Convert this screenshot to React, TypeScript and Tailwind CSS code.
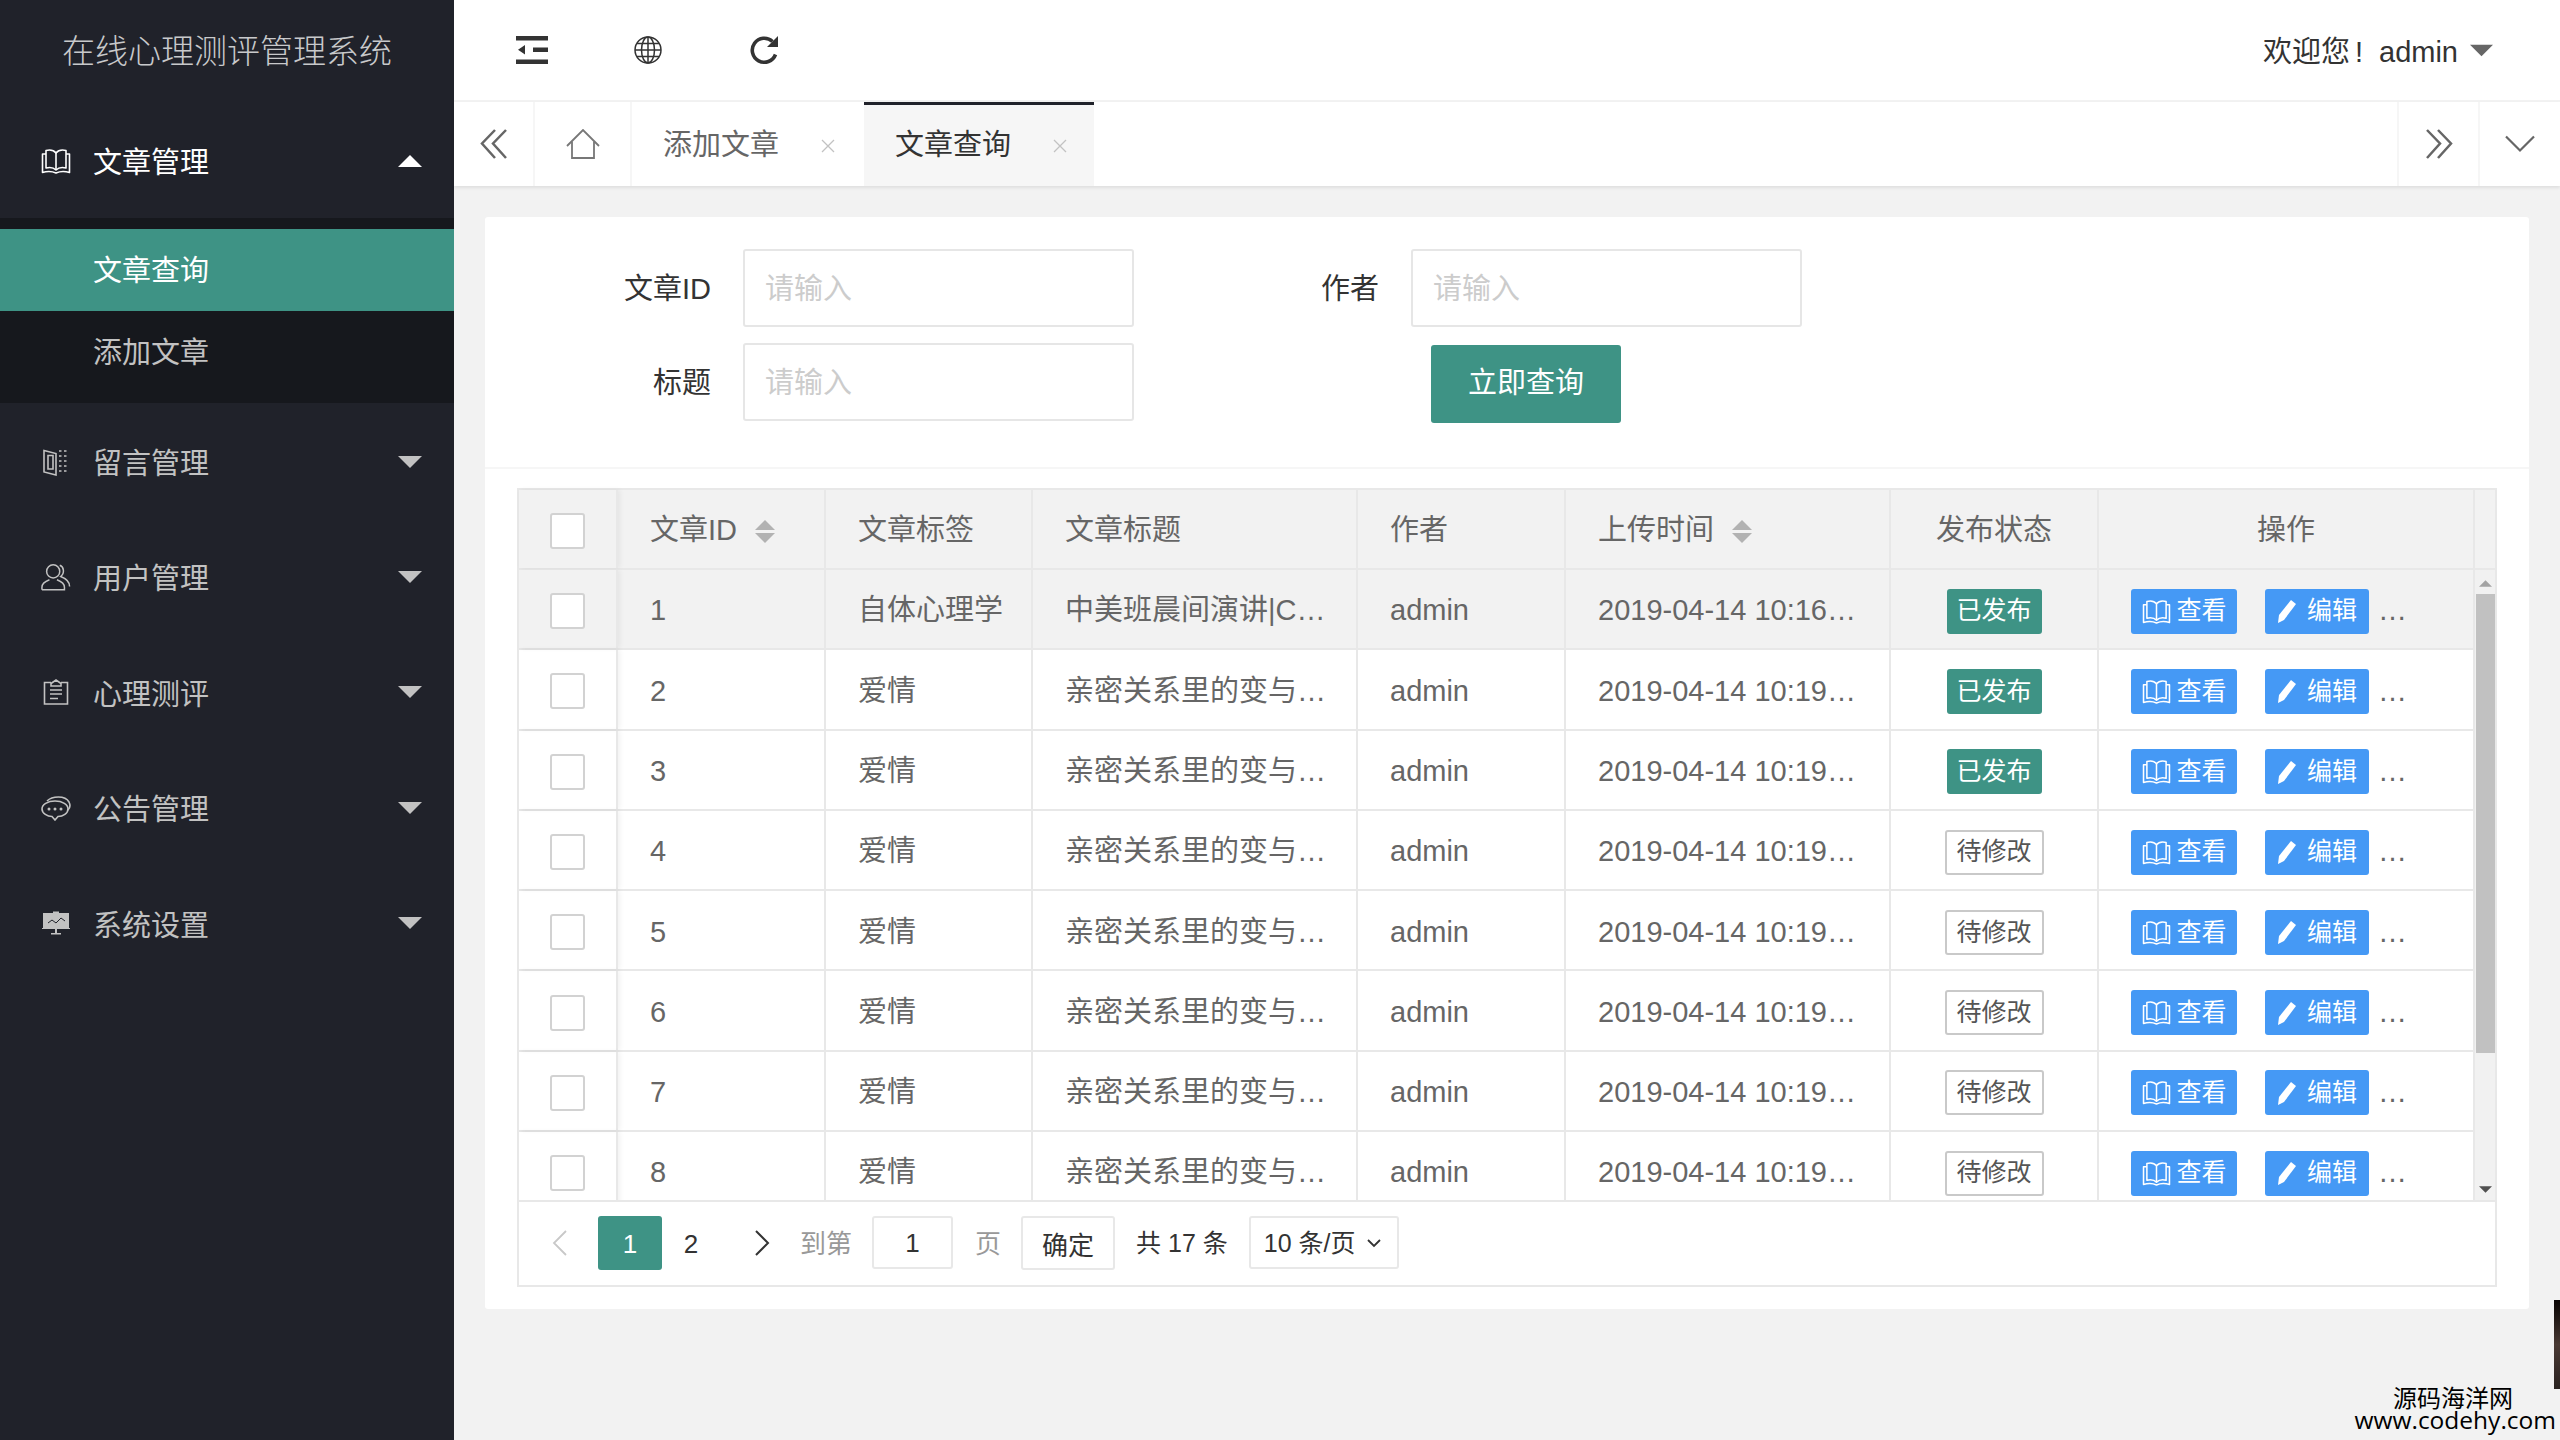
import type { ReactNode } from "react";

const colWidths = "grid-cols-[99px_208px_207px_325px_208px_325px_208px_376px]";

const rows = [
  { id: 1, tag: "自体心理学", title: "中美班晨间演讲|Coco老师", time: "2019-04-14 10:16:20", done: true },
  { id: 2, tag: "爱情", title: "亲密关系里的变与不变之道", time: "2019-04-14 10:19:31", done: true },
  { id: 3, tag: "爱情", title: "亲密关系里的变与不变之道", time: "2019-04-14 10:19:31", done: true },
  { id: 4, tag: "爱情", title: "亲密关系里的变与不变之道", time: "2019-04-14 10:19:31", done: false },
  { id: 5, tag: "爱情", title: "亲密关系里的变与不变之道", time: "2019-04-14 10:19:31", done: false },
  { id: 6, tag: "爱情", title: "亲密关系里的变与不变之道", time: "2019-04-14 10:19:31", done: false },
  { id: 7, tag: "爱情", title: "亲密关系里的变与不变之道", time: "2019-04-14 10:19:31", done: false },
  { id: 8, tag: "爱情", title: "亲密关系里的变与不变之道", time: "2019-04-14 10:19:31", done: false },
];

function BookIcon({ className }: { className?: string }) {
  return (
    <svg className={className} viewBox="0 0 30 26" fill="none" stroke="currentColor" strokeWidth="1.6" strokeLinejoin="round">
      <path d="M15 5C13 2.500 9 1.500 5 2.500V20C9 19 12.500 19.500 15 22C17.500 19.500 21 19 25 20V2.500C21 1.500 17 2.500 15 5Z" />
      <path d="M15 5V22" />
      <path d="M5 6H1.500V24.500C6.500 23 11 23.200 15 25C19 23.200 23.500 23 28.500 24.500V6H25" />
    </svg>
  );
}

function MenuIcon({ name }: { name: string }) {
  if (name === "book") return <BookIcon className="w-[30px] h-[26px] text-white" />;
  if (name === "door")
    return (
      <svg className="w-[30px] h-[28px]" viewBox="0 0 30 28" fill="none" stroke="currentColor" strokeWidth="1.6">
        <path d="M3 2.500L15 5.500V27L3 24V2.500Z" />
        <path d="M7 7.500H12V21H7V7.500Z" />
        <path d="M18 3H28M18 8H28M18 13H28M18 18H28M18 23H28" strokeDasharray="2.500 2.500" />
      </svg>
    );
  if (name === "user")
    return (
      <svg className="w-[32px] h-[30px]" viewBox="0 0 32 30" fill="none" stroke="currentColor" strokeWidth="1.6">
        <circle cx="13" cy="9" r="7" />
        <path d="M1 28.500V26C1 22 5 19.500 9 18M17 18C21 19.500 25 22 25 26V28.500H1" />
        <path d="M20 2.500C24.500 4 25.500 11 21 14.500C26 16.500 30.500 20.500 30.500 25" />
      </svg>
    );
  if (name === "form")
    return (
      <svg className="w-[26px] h-[26px]" viewBox="0 0 26 26" fill="none" stroke="currentColor" strokeWidth="1.6">
        <path d="M8 3.500H1.500V25H24.500V3.500H18" />
        <path d="M8 7V4.500L13 1L18 4.500V7H8Z" />
        <path d="M7 11H19M7 15H19M7 19.500H15" />
      </svg>
    );
  if (name === "chat")
    return (
      <svg className="w-[30px] h-[26px]" viewBox="0 0 30 26" fill="none" stroke="currentColor" strokeWidth="1.6">
        <path d="M14 6C6.500 6 1 9.500 1 14C1 18.500 6.500 21.500 11 21.500L14 25L17 21.500C22 21.500 27 18.500 27 14C27 9.500 21.500 6 14 6Z" />
        <path d="M6 6C11 1 24 0 28 7C29.500 10 29 13 27 15" />
        <circle cx="8" cy="14" r="1.500" fill="currentColor" stroke="none" />
        <circle cx="14" cy="14" r="1.500" fill="currentColor" stroke="none" />
        <circle cx="20" cy="14" r="1.500" fill="currentColor" stroke="none" />
      </svg>
    );
  return (
    <svg className="w-[28px] h-[24px]" viewBox="0 0 28 24" fill="none">
      <path d="M11 0.500H17V2H27V17H28V18H15V22H19V23.500H9V22H13V18H0V17H1V2H11V0.500Z" fill="currentColor" />
      <path d="M6 12L10 9L14 12L19 7L23 10" stroke="#20222a" strokeWidth="1" />
    </svg>
  );
}

function Triangle({ up, className }: { up?: boolean; className: string }) {
  return (
    <svg className={className} viewBox="0 0 24 12" fill="currentColor">
      <path d={up ? "M12 0L24 12H0Z" : "M0 0H24L12 12Z"} />
    </svg>
  );
}

function NavGroup({ icon, label }: { icon: string; label: string }) {
  return (
    <div className="h-[115.400px] flex items-center pl-[41px] pr-[32px] text-[#c2c2c2]">
      <span className="w-[30px] flex justify-center"><MenuIcon name={icon} /></span>
      <span className="ml-[22px] flex-1 pt-[6px] text-[29px]">{label}</span>
      <Triangle className="w-[24px] h-[12px]" />
    </div>
  );
}

function Sidebar() {
  return (
    <aside className="w-[454px] shrink-0 bg-[#20222a]">
      <div className="h-[103px] flex items-center justify-center text-[33px] font-light text-[#c8c9cb]">
        在线心理测评管理系统
      </div>
      <div className="h-[115px] flex items-center pl-[41px] pr-[32px] text-white">
        <span className="w-[30px] flex justify-center"><MenuIcon name="book" /></span>
        <span className="ml-[22px] flex-1 pt-[6px] text-[29px]">文章管理</span>
        <Triangle up className="w-[24px] h-[12px]" />
      </div>
      <div className="bg-[#16181d] pt-[11px] pb-[10px] h-[185px] mb-[1px]">
        <div className="h-[82px] bg-[#3e9385] text-white text-[29px] flex items-center pl-[93px] pt-[4px]">文章查询</div>
        <div className="h-[82px] text-[#c2c2c2] text-[29px] flex items-center pl-[93px] pt-[4px]">添加文章</div>
      </div>
      <NavGroup icon="door" label="留言管理" />
      <NavGroup icon="user" label="用户管理" />
      <NavGroup icon="form" label="心理测评" />
      <NavGroup icon="chat" label="公告管理" />
      <NavGroup icon="screen" label="系统设置" />
    </aside>
  );
}

function Header() {
  return (
    <header className="h-[102px] shrink-0 bg-white border-b-2 border-[#f2f2f2] flex items-center text-[#333]">
      <svg className="ml-[62px] w-[32px] h-[28px]" viewBox="0 0 32 28" fill="currentColor">
        <path d="M0 0H32V4.500H0ZM17 11.500H32V16H17ZM0 23.500H32V28H0ZM2 13.800L9 9V18.500Z" />
      </svg>
      <svg className="ml-[86px] w-[28px] h-[28px]" viewBox="0 0 28 28" fill="none" stroke="currentColor" strokeWidth="1.500">
        <circle cx="14" cy="14" r="13" />
        <ellipse cx="14" cy="14" rx="6.500" ry="13" />
        <path d="M14 1V27M1 14H27M3 7.500H25M3 20.500H25" />
      </svg>
      <svg className="ml-[87px] w-[30px] h-[30px]" viewBox="0 0 30 30" fill="none" stroke="currentColor" strokeWidth="3.600">
        <path d="M26.500 19.500A12 12 0 1 1 23.500 6.500" />
        <path d="M29 1V12H18Z" fill="currentColor" stroke="none" />
      </svg>
      <div className="ml-auto flex items-center text-[29px] pr-[67px]">
        <span className="flex items-center pt-[6px]">
          <span>欢迎您</span>
          <span className="w-[29px] pl-[5px]">!</span>
          <span>admin</span>
        </span>
        <Triangle className="ml-[12px] w-[23px] h-[13px] text-[#666]" />
      </div>
    </header>
  );
}

function CloseIcon({ className }: { className?: string }) {
  return (
    <svg className={className} viewBox="0 0 16 16" fill="none" stroke="currentColor" strokeWidth="1.300">
      <path d="M2 2L14 14M14 2L2 14" />
    </svg>
  );
}

function TabCell({ children, className }: { children: ReactNode; className: string }) {
  return <div className={`h-full flex items-center justify-center border-[#f6f6f6] ${className}`}>{children}</div>;
}

function TabBar() {
  return (
    <div className="h-[84px] shrink-0 bg-white flex items-stretch text-[#666] shadow-[0_2px_3px_rgba(0,0,0,0.08)] relative">
      <TabCell className="w-[81px] border-r-2">
        <svg className="w-[30px] h-[36px]" viewBox="0 0 30 36" fill="none" stroke="currentColor" strokeWidth="2.500">
          <path d="M16 3L3 16.500L16 31M27 3L14 16.500L27 31" transform="translate(0 1)" />
        </svg>
      </TabCell>
      <TabCell className="w-[97px] border-r-2">
        <svg className="w-[34px] h-[30px]" viewBox="0 0 34 30" fill="none" stroke="#777" strokeWidth="1.800">
          <path d="M1 17L17 1L33 17" />
          <path d="M6 12.500V29H28V12.500" />
        </svg>
      </TabCell>
      <div className="w-[232px] flex items-center pl-[31px] pt-[3px] text-[29px]">
        <span>添加文章</span>
        <CloseIcon className="ml-[41px] w-[16px] h-[16px] text-[#c2c2c2]" />
      </div>
      <div className="w-[230px] bg-[#f6f6f6] border-t-[3px] border-[#20222a] flex items-center pl-[31px] text-[29px] text-[#333]">
        <span>文章查询</span>
        <CloseIcon className="ml-[41px] w-[16px] h-[16px] text-[#c2c2c2]" />
      </div>
      <div className="flex-1" />
      <TabCell className="w-[83px] border-l-2 border-r-2">
        <svg className="w-[30px] h-[36px]" viewBox="0 0 30 36" fill="none" stroke="currentColor" strokeWidth="2.500">
          <path d="M3 4L16 17.500L3 32M14 4L27 17.500L14 32" />
        </svg>
      </TabCell>
      <TabCell className="w-[80px]">
        <svg className="w-[30px] h-[18px]" viewBox="0 0 30 18" fill="none" stroke="currentColor" strokeWidth="2.200">
          <path d="M1 1.500L15 15.500L29 1.500" />
        </svg>
      </TabCell>
    </div>
  );
}

function Field({ label, width }: { label: string; width: string }) {
  return (
    <>
      <label className={`${width} pr-[32px] pt-[3px] text-right text-[29px] text-[#333]`}>{label}</label>
      <input
        readOnly
        placeholder="请输入"
        className="w-[391px] h-[78px] box-border border-2 border-[#e6e6e6] rounded-[3px] pl-[20px] pt-[3px] text-[29px] outline-none placeholder:text-[#ccc]"
      />
    </>
  );
}

function SearchForm() {
  return (
    <div className="-mx-[32px] h-[252px] box-border pt-[32px] border-b-2 border-[#f6f6f6]">
      <div className="flex items-center">
        <Field label="文章ID" width="w-[258px]" />
        <Field label="作者" width="w-[277px]" />
      </div>
      <div className="flex items-center mt-[14px]">
        <Field label="标题" width="w-[258px]" />
        <button className="ml-[297px] mt-[4px] w-[190px] h-[78px] bg-[#3e9385] rounded-[3px] text-white text-[29px]">
          立即查询
        </button>
      </div>
    </div>
  );
}

function Checkbox() {
  return <span className="w-[35px] h-[36px] box-border bg-white border-2 border-[#d2d2d2] rounded-[3px]" />;
}

function SortIcon() {
  return (
    <span className="ml-[18px] flex flex-col gap-[3px] text-[#b2b2b2]">
      <Triangle up className="w-[20px] h-[10px]" />
      <Triangle className="w-[20px] h-[10px]" />
    </span>
  );
}

const cell = "h-full box-border border-r-2 border-[#e8e8e8] flex items-center pl-[32px] pt-[4px] min-w-0";

function TableHead() {
  return (
    <div className="flex h-[80px] box-border bg-[#f2f2f2] border-b-2 border-[#e8e8e8] text-[29px] text-[#666]">
      <div className={`grid ${colWidths}`}>
        <div className={`${cell} !pl-[31px] shadow-[2px_0_5px_rgba(0,0,0,0.06)]`}><Checkbox /></div>
        <div className={cell}>文章ID<SortIcon /></div>
        <div className={cell}>文章标签</div>
        <div className={cell}>文章标题</div>
        <div className={cell}>作者</div>
        <div className={cell}>上传时间<SortIcon /></div>
        <div className={`${cell} !pl-0 justify-center`}>发布状态</div>
        <div className={`${cell} !pl-0 justify-center`}>操作</div>
      </div>
      <div className="flex-1" />
    </div>
  );
}

function ActionButton({ icon, label, className }: { icon: ReactNode; label: string; className: string }) {
  return (
    <span className={`h-[45px] bg-[#4599f5] rounded-[3px] text-white text-[25px] flex items-center justify-center ${className}`}>
      {icon}
      {label}
    </span>
  );
}

function TableRow({ row }: { row: (typeof rows)[number] }) {
  return (
    <div className={`grid ${colWidths} h-[80.300px] box-border border-b-2 border-[#e8e8e8] text-[29px] text-[#666] ${row.id === 1 ? "bg-[#f2f2f2]" : "bg-white"}`}>
      <div className={`${cell} !pl-[31px] shadow-[2px_0_5px_rgba(0,0,0,0.06)]`}><Checkbox /></div>
      <div className={cell}>{row.id}</div>
      <div className={`${cell} pr-[14px]`}><span className="truncate">{row.tag}</span></div>
      <div className={`${cell} pr-[29px]`}><span className="truncate">{row.title}</span></div>
      <div className={cell}>admin</div>
      <div className={`${cell} pr-[29px]`}><span className="truncate">{row.time}</span></div>
      <div className={`${cell} !pl-0 justify-center`}>
        {row.done ? (
          <span className="w-[95px] h-[45px] bg-[#3e9385] rounded-[3px] text-white text-[25px] flex items-center justify-center">已发布</span>
        ) : (
          <span className="w-[99px] h-[45px] box-border bg-white border-2 border-[#c9c9c9] rounded-[3px] text-[#555] text-[25px] flex items-center justify-center">待修改</span>
        )}
      </div>
      <div className={cell}>
        <ActionButton className="w-[106px]" label="查看" icon={<BookIcon className="w-[31px] h-[25px] mr-[4px]" />} />
        <ActionButton
          className="ml-[28px] w-[104px]"
          label="编辑"
          icon={
            <svg className="w-[20px] h-[24px] mr-[10px]" viewBox="0 0 20 24" fill="currentColor">
              <path d="M14 1L19 5L7 21L1 24L2 16Z" />
            </svg>
          }
        />
        <span className="ml-[9px] text-[#666]">…</span>
      </div>
    </div>
  );
}

function Scrollbar() {
  return (
    <div className="flex-1 bg-[#f1f1f1] flex flex-col items-center">
      <Triangle up className="w-[13px] h-[7px] mt-[10px] text-[#a3a3a3]" />
      <div className="w-[19px] h-[459px] mt-[7px] bg-[#c1c1c1]" />
      <div className="flex-1" />
      <Triangle className="w-[13px] h-[7px] mb-[7px] text-[#505050]" />
    </div>
  );
}

function Pagination() {
  return (
    <div className="h-[83px] flex items-start pt-[14px] text-[26px] text-[#333]">
      <svg className="ml-[33px] mt-[14px] w-[16px] h-[26px] text-[#c8c8c8]" viewBox="0 0 16 26" fill="none" stroke="currentColor" strokeWidth="1.800">
        <path d="M14 1L2 13L14 25" />
      </svg>
      <span className="ml-[30px] w-[64px] h-[54px] pt-[2px] bg-[#3e9385] rounded-[3px] text-white flex items-center justify-center">1</span>
      <span className="w-[58px] h-[54px] pt-[2px] flex items-center justify-center">2</span>
      <svg className="ml-[34px] mt-[14px] w-[16px] h-[26px]" viewBox="0 0 16 26" fill="none" stroke="currentColor" strokeWidth="2">
        <path d="M2 1L14 13L2 25" />
      </svg>
      <span className="ml-[30px] h-[54px] pt-[2px] flex items-center text-[#999]">到第</span>
      <span className="ml-[20px] w-[81px] h-[53px] pt-[2px] box-border border-2 border-[#e8e8e8] rounded-[3px] flex items-center justify-center">1</span>
      <span className="ml-[22px] h-[54px] pt-[2px] flex items-center text-[#999]">页</span>
      <span className="ml-[20px] w-[94px] h-[54px] pt-[6px] box-border border-2 border-[#e8e8e8] rounded-[3px] flex items-center justify-center">确定</span>
      <span className="ml-[21px] h-[54px] pt-[2px] text-[25px] flex items-center">共 17 条</span>
      <span className="ml-[21px] w-[150px] h-[53px] pt-[2px] box-border border-2 border-[#e8e8e8] rounded-[3px] text-[25px] flex items-center pl-[13px]">
        10 条/页
        <svg className="ml-[12px] w-[14px] h-[9px]" viewBox="0 0 14 9" fill="none" stroke="currentColor" strokeWidth="1.800">
          <path d="M1 1L7 7L13 1" />
        </svg>
      </span>
    </div>
  );
}

export default function App() {
  return (
    <div className="relative w-[2560px] h-[1440px] overflow-hidden flex bg-[#f2f2f2] [font-family:Liberation_Sans,Noto_Sans_CJK_SC,sans-serif]">
      <Sidebar />
      <div className="flex-1 min-w-0 flex flex-col">
        <Header />
        <TabBar />
        <main className="pt-[31px] px-[31px]">
          <div className="h-[1092px] box-border bg-white rounded-[3px] px-[32px]">
            <SearchForm />
            <div className="mt-[19px] h-[799px] box-border border-2 border-[#e8e8e8]">
              <TableHead />
              <div className="flex h-[632px] box-border border-b-2 border-[#e8e8e8]">
                <div className="overflow-hidden">
                  {rows.map((row) => (
                    <TableRow key={row.id} row={row} />
                  ))}
                </div>
                <Scrollbar />
              </div>
              <Pagination />
            </div>
          </div>
        </main>
      </div>
      <div className="absolute right-0 top-[1300px] w-[6px] h-[89px] bg-gradient-to-b from-[#0a0605] via-[#4a3a34] to-[#2a2220]" />
      <div className="absolute right-[4px] top-[1387px] text-right text-black leading-[22px] [font-family:Open_Sans,Noto_Sans_CJK_SC,sans-serif]">
        <div className="text-[24px] pr-[43px]">源码海洋网</div>
        <div className="text-[24.500px]">www.codehy.com</div>
      </div>
    </div>
  );
}
